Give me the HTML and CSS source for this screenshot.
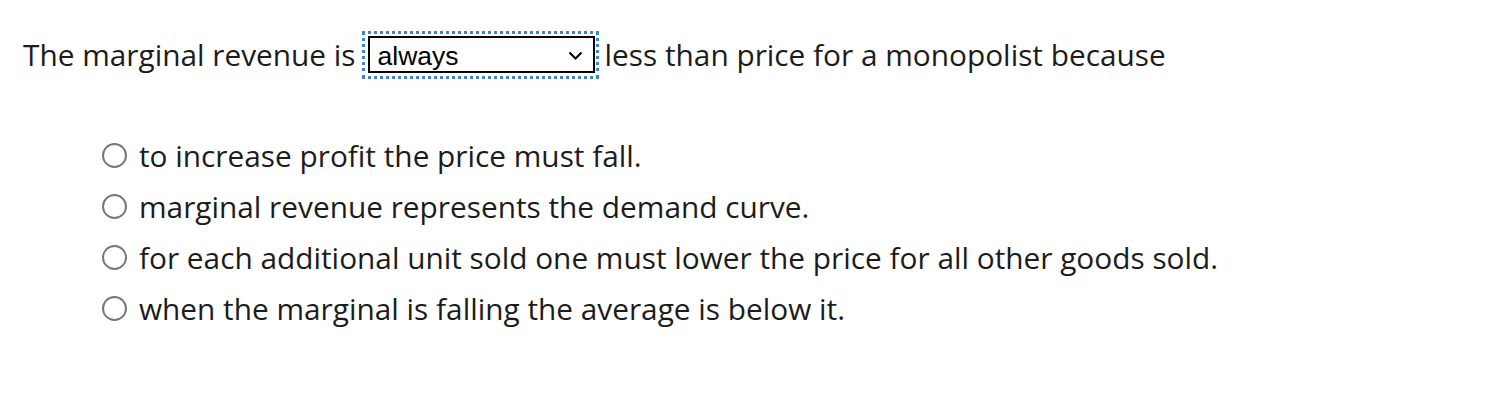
FILE: index.html
```html
<!DOCTYPE html>
<html>
<head>
<meta charset="utf-8">
<link rel="stylesheet" href="styles.css">
</head>
<body>
<div class="question">
  <div class="stem">
    <span class="stem-text">The marginal revenue is</span>
    <span class="focus-ring">
      <span class="dropdown" role="combobox" aria-expanded="false">
        <span class="dropdown-value">always</span>
        <svg class="chevron" width="15" height="10" viewBox="0 0 15 10"><path d="M1.5 1.5 L7.5 7.5 L13.5 1.5" fill="none" stroke="#000" stroke-width="2"/></svg>
      </span>
    </span>
    <span class="stem-text">less than price for a monopolist because</span>
  </div>
  <ul class="options">
    <li class="option"><input type="radio" name="q" class="radio"><span>to increase profit the price must fall.</span></li>
    <li class="option"><input type="radio" name="q" class="radio"><span>marginal revenue represents the demand curve.</span></li>
    <li class="option"><input type="radio" name="q" class="radio"><span>for each additional unit sold one must lower the price for all other goods sold.</span></li>
    <li class="option"><input type="radio" name="q" class="radio"><span>when the marginal is falling the average is below it.</span></li>
  </ul>
</div>
</body>
</html>
```
FILE: styles.css
```css
html, body {
  margin: 0;
  padding: 0;
  background: #fff;
}
.question {
  padding: 26px 0 0 23px;
  font-family: "Open Sans", sans-serif;
  font-size: 29.8px;
  color: #1c1c1c;
}
.stem {
  display: flex;
  align-items: center;
  height: 57px;
  white-space: nowrap;
}
.stem-text {
  line-height: 40px;
}
.focus-ring {
  display: inline-block;
  margin: 0 6px 0 6px;
  padding: 2px 1px 3px 3px;
  border: 3px dotted #4384c8;
}
.dropdown {
  position: relative;
  display: block;
  box-sizing: border-box;
  width: 227px;
  height: 37px;
  padding: 4px 0 1px 8px;
  border: 2px solid #000;
  background: #fff;
  color: #000;
  font-family: "Liberation Sans", Arial, sans-serif;
  font-size: 26.5px;
  line-height: 28px;
}
.dropdown-value {
  display: block;
}
.chevron {
  position: absolute;
  left: 198px;
  top: 13px;
}
.options {
  list-style: none;
  margin: 47px 0 0 0;
  padding: 0 0 0 79px;
}
.option {
  display: flex;
  align-items: center;
  height: 51px;
  line-height: 51px;
  white-space: nowrap;
}
.radio {
  -webkit-appearance: none;
  appearance: none;
  box-sizing: border-box;
  width: 25px;
  height: 25px;
  margin: 0 12px 0 0;
  border: 2px solid #777;
  border-radius: 50%;
  background: #fff;
  flex: none;
}
```
